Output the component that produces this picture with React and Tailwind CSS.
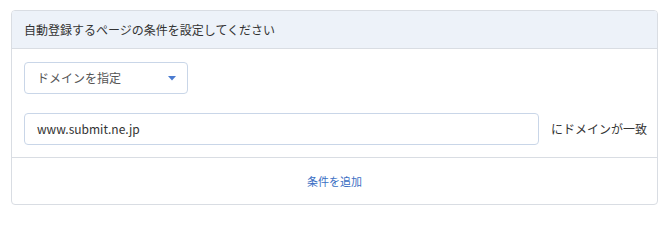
export default function App() {
  return (
    <div className="w-[669px] h-[213px] bg-white pt-[10px] pl-[11px] font-['Noto_Sans_CJK_JP','Noto_Sans',sans-serif] leading-none">
      <div className="w-[647px] h-[195px] border border-[#d9dde3] rounded-[4px] flex flex-col overflow-hidden">
        <div className="h-[38px] shrink-0 bg-[#edf2f9] border-b border-[#d9dde3] flex items-center pl-[12px] text-[12px] text-[#333]">
          自動登録するページの条件を設定してください
        </div>
        <div className="px-[12px] pt-[13px] pb-[12px] border-b border-[#d9dde3] flex flex-col gap-[19px]">
          <div className="w-[164px] h-[32px] border border-[#c9d6e8] rounded-[4px] flex items-center justify-between pl-[12px] pr-[11px] text-[12px] text-[#555]">
            <span>ドメインを指定</span>
            <svg width="8" height="5" viewBox="0 0 8 5"><path d="M0 0h8L4 4.5z" fill="#4a7bd0" /></svg>
          </div>
          <div className="flex items-center h-[32px]">
            <div className="w-[515px] h-[32px] shrink-0 border border-[#c9d6e8] rounded-[4px] flex items-center pl-[12px] text-[12px] text-[#333]">
              www.submit.ne.jp
            </div>
            <span className="ml-[12px] whitespace-nowrap text-[12px] text-[#333]">にドメインが一致</span>
          </div>
        </div>
        <div className="flex-1 flex items-center justify-center text-[11px] text-[#3b6fc4]">
          条件を追加
        </div>
      </div>
    </div>
  );
}
